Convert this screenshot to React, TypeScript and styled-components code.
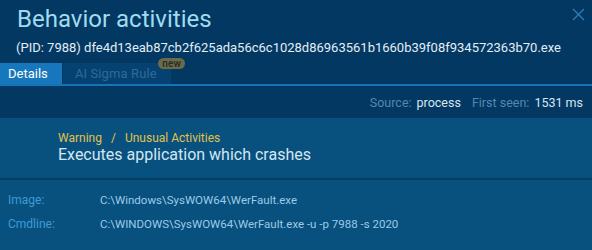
import styled, { createGlobalStyle } from "styled-components";

const Global = createGlobalStyle`
  body {
    margin: 0;
    background: #033862;
    font-family: Roboto, "Liberation Sans", sans-serif;
  }
`;

const Panel = styled.div`
  width: 592px;
  height: 250px;
  background: #033862;
  display: flex;
  flex-direction: column;
  overflow: hidden;
`;

const Head = styled.header`
  position: relative;
  padding: 4px 16px 0 16px;
`;

const Title = styled.h1`
  margin: 0;
  font-size: 24px;
  font-weight: 400;
  line-height: 30px;
  color: #9fdcf0;
  padding-left: 1px;
`;

const Sub = styled.div`
  font-size: 13px;
  line-height: 18px;
  margin-top: 5px;
  color: #e2eef6;
`;

const Close = styled.button`
  position: absolute;
  top: 6px;
  right: 6px;
  width: 16px;
  height: 16px;
  padding: 0;
  border: none;
  background: none;
  display: flex;
  align-items: center;
  justify-content: center;
`;

const Tabs = styled.nav`
  display: flex;
  margin-top: 6px;
  border-bottom: 2px solid #1474b8;
  height: 21px;
`;

const Tab = styled.div<{ $active?: boolean }>`
  position: relative;
  padding: 0 ${(p) => (p.$active ? "8px" : "12px")};
  margin-right: 1px;
  font-size: 13px;
  line-height: 21px;
  background: ${(p) => (p.$active ? "#1677bd" : "#064271")};
  color: ${(p) => (p.$active ? "#ffffff" : "#2e6a97")};
  width: ${(p) => (p.$active ? "46px" : "84px")};
  letter-spacing: ${(p) => (p.$active ? "0" : "0.1px")};
`;

const Badge = styled.span`
  position: absolute;
  top: -5px;
  right: -14px;
  height: 11px;
  padding: 0 4px;
  border-radius: 6px;
  background: #6c6b47;
  color: #1f2a2c;
  font-size: 10px;
  line-height: 11px;
  font-weight: 500;
`;

const Meta = styled.div`
  display: flex;
  justify-content: flex-end;
  gap: 11px;
  height: 32px;
  align-items: center;
  padding: 0 9px 0 0;
  font-size: 12.5px;
`;

const MetaItem = styled.span`
  color: #5089b3;
  b {
    font-weight: 400;
    color: #d4e6f2;
    margin-left: 5px;
  }
`;

const Body = styled.section`
  flex: 1;
  background: #08517e;
`;

const Summary = styled.div`
  padding: 13px 58px 0;
  height: 47px;
  border-bottom: 2px solid #053d64;
`;

const Crumbs = styled.div`
  font-size: 12px;
  line-height: 14px;
  color: #e0c24a;
  span {
    margin: 0 9px;
  }
`;

const Heading = styled.div`
  font-size: 16px;
  line-height: 20px;
  color: #d3e6f2;
`;

const Fields = styled.div`
  display: grid;
  grid-template-columns: 92px 1fr;
  row-gap: 7px;
  padding: 12px 8px 0;
  line-height: 17px;
`;

const Label = styled.div`
  color: #3d9bd8;
  font-size: 12px;
`;

const Value = styled.div`
  color: #9ccbe8;
  font-size: 11.5px;
`;

export default function App() {
  return (
    <Panel>
      <Global />
      <Head>
        <Title>Behavior activities</Title>
        <Sub>(PID: 7988) dfe4d13eab87cb2f625ada56c6c1028d86963561b1660b39f08f934572363b70.exe</Sub>
        <Close aria-label="close">
          <svg width="13" height="13" viewBox="0 0 13 13">
            <path d="M1 1L12 12M12 1L1 12" stroke="#2a7bb9" strokeWidth="1.4" />
          </svg>
        </Close>
      </Head>
      <Tabs>
        <Tab $active>Details</Tab>
        <Tab>
          AI Sigma Rule
          <Badge>new</Badge>
        </Tab>
      </Tabs>
      <Meta>
        <MetaItem>
          Source:<b>process</b>
        </MetaItem>
        <MetaItem>
          First seen:<b>1531 ms</b>
        </MetaItem>
      </Meta>
      <Body>
        <Summary>
          <Crumbs>
            Warning<span>/</span>Unusual Activities
          </Crumbs>
          <Heading>Executes application which crashes</Heading>
        </Summary>
        <Fields>
          <Label>Image:</Label>
          <Value>C:\Windows\SysWOW64\WerFault.exe</Value>
          <Label>Cmdline:</Label>
          <Value>C:\WINDOWS\SysWOW64\WerFault.exe -u -p 7988 -s 2020</Value>
        </Fields>
      </Body>
    </Panel>
  );
}
